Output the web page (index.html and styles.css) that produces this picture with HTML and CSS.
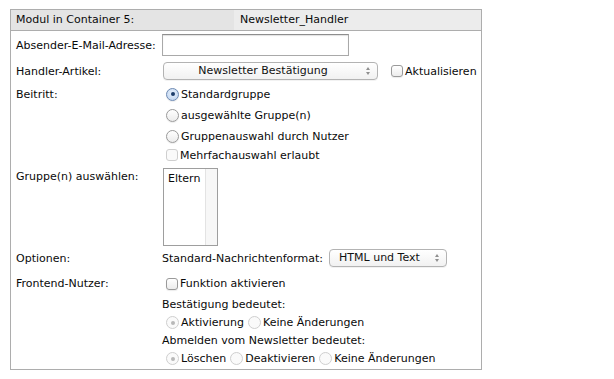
FILE: index.html
```html
<!DOCTYPE html>
<html>
<head>
    <meta charset="utf-8">
    <title>Newsletter Handler</title>
    <link rel="stylesheet" href="styles.css">
</head>
<body>
    <div class="module">
        <div class="module-head">
            <div class="head-label">Modul in Container 5:</div>
            <div class="head-value">Newsletter_Handler</div>
        </div>

        <table class="settings">
            <tr class="row-sender">
                <td class="label"><div class="line">Absender-E-Mail-Adresse:</div></td>
                <td><div class="line"><input class="text-field" type="text"></div></td>
            </tr>
            <tr class="row-handler">
                <td class="label"><div class="line">Handler-Artikel:</div></td>
                <td>
                    <div class="line">
                        <span class="select select-wide">Newsletter Bestätigung</span>
                        <label class="choice refresh"><input type="checkbox" class="check">Aktualisieren</label>
                    </div>
                </td>
            </tr>
            <tr>
                <td class="label"><div class="line l22">Beitritt:</div></td>
                <td>
                    <div class="line l22"><label class="choice"><input type="radio" name="join" class="radio" checked>Standardgruppe</label></div>
                    <div class="line l21"><label class="choice"><input type="radio" name="join" class="radio">ausgewählte Gruppe(n)</label></div>
                    <div class="line l21"><label class="choice"><input type="radio" name="join" class="radio">Gruppenauswahl durch Nutzer</label></div>
                    <div class="line l16"><label class="choice"><input type="checkbox" class="check" disabled>Mehrfachauswahl erlaubt</label></div>
                </td>
            </tr>
            <tr class="row-groups">
                <td class="label"><div class="line l18">Gruppe(n) auswählen:</div></td>
                <td>
                    <div class="listbox">
                        <div class="list-items">Eltern</div>
                        <div class="list-scroll"></div>
                    </div>
                </td>
            </tr>
            <tr>
                <td class="label"><div class="line l20">Optionen:</div></td>
                <td>
                    <div class="line l20">
                        Standard-Nachrichtenformat:
                        <span class="select select-format">HTML und Text</span>
                    </div>
                </td>
            </tr>
            <tr class="row-frontend">
                <td class="label"><div class="line l21">Frontend-Nutzer:</div></td>
                <td>
                    <div class="line l21"><label class="choice"><input type="checkbox" class="check">Funktion aktivieren</label></div>
                    <div class="line l20">Bestätigung bedeutet:</div>
                    <div class="line l17">
                        <label class="choice"><input type="radio" name="confirm" class="radio" checked disabled>Aktivierung</label>
                        <label class="choice"><input type="radio" name="confirm" class="radio" disabled>Keine Änderungen</label>
                    </div>
                    <div class="line l19">Abmelden vom Newsletter bedeutet:</div>
                    <div class="line l17">
                        <label class="choice"><input type="radio" name="leave" class="radio" checked disabled>Löschen</label>
                        <label class="choice"><input type="radio" name="leave" class="radio" disabled>Deaktivieren</label>
                        <label class="choice"><input type="radio" name="leave" class="radio" disabled>Keine Änderungen</label>
                    </div>
                </td>
            </tr>
        </table>
    </div>
</body>
</html>
```

FILE: styles.css
```css
/* Page */
body {
    margin: 0;
    padding: 9px 10px;
    background: #ffffff;
    font-family: 'DejaVu Sans', Verdana, sans-serif;
    font-size: 11px;
    color: #0a0a0a;
}

/* Module box */
.module {
    width: 470px;
    border: 1px solid #adadad;
}

.module-head {
    display: flex;
    height: 20px;
    border-bottom: 1px solid #adadad;
}

.head-label {
    width: 218px;
    padding-left: 5px;
    background: #e4e4e4;
    line-height: 20px;
}

.head-value {
    flex: 1;
    padding-left: 6px;
    background: #ececec;
    line-height: 20px;
}

/* Settings table */
.settings {
    border-collapse: collapse;
    width: 100%;
}

.settings td {
    padding: 0;
    vertical-align: top;
}

.settings td.label {
    width: 146px;
    padding-left: 5px;
}

.line {
    display: flex;
    align-items: center;
    white-space: nowrap;
}

.row-sender .line { height: 28px; }
.row-handler .line { height: 24px; }
.l16 { height: 16px; }
.l17 { height: 17px; }
.l18 { height: 18px; }
.l19 { height: 19px; }
.l20 { height: 20px; }
.l21 { height: 21px; }
.l22 { height: 22px; }

.row-groups td { padding-top: 5px; padding-bottom: 2px; }
.row-groups td.label { padding-top: 4px; }
.row-frontend td { padding-top: 5px; padding-bottom: 2px; }

/* Text input */
.text-field {
    width: 187px;
    height: 22px;
    margin: 0;
    box-sizing: border-box;
    border: 1px solid #a9a9a9;
    border-top-color: #8e8e8e;
    box-shadow: inset 0 1px 1px rgba(0,0,0,0.12);
}

/* Select boxes, Mac style */
.select {
    position: relative;
    display: inline-block;
    box-sizing: border-box;
    height: 18px;
    line-height: 16px;
    border: 1px solid #b3b3b3;
    border-radius: 4px;
    background: linear-gradient(#ffffff, #f1f1f1);
    box-shadow: 0 1px 0 rgba(0,0,0,0.05);
    color: #111;
}

.select-wide {
    width: 215px;
    margin-left: 1px;
    padding-right: 15px;
    text-align: center;
}

.select-format {
    width: 118px;
    margin-left: 6px;
    padding-left: 9px;
}

/* the small up/down arrows */
.select::before,
.select::after {
    content: "";
    position: absolute;
    right: 7px;
    width: 0;
    height: 0;
    border-left: 2.5px solid transparent;
    border-right: 2.5px solid transparent;
}

.select::before {
    top: 4px;
    border-bottom: 3px solid #8f8f8f;
}

.select::after {
    top: 9px;
    border-top: 3px solid #8f8f8f;
}

/* Checkboxes and radios */
.choice {
    display: inline-flex;
    align-items: center;
    white-space: nowrap;
}

.check,
.radio {
    -webkit-appearance: none;
    appearance: none;
    box-sizing: border-box;
    width: 13px;
    height: 13px;
    margin: 0 2px 0 4px;
    border: 1px solid #9a9a9a;
    background: linear-gradient(#ffffff, #ececec);
    box-shadow: 0 1px 1px rgba(0,0,0,0.08);
    position: relative;
}

.check {
    width: 12px;
    height: 12px;
    border-radius: 3px;
}

.radio {
    border-radius: 50%;
}

.radio:checked::after {
    content: "";
    position: absolute;
    left: 3.5px;
    top: 3.5px;
    width: 4px;
    height: 4px;
    border-radius: 50%;
    background: #1c3d6b;
}

.radio:checked:not(:disabled) {
    border-color: #6f8bb3;
    background: radial-gradient(circle at 50% 40%, #eaf2fc, #b9d0ee);
}

.check:disabled,
.radio:disabled {
    border-color: #cfcfcf;
    background: #fafafa;
    box-shadow: none;
}

.radio:checked:disabled::after {
    background: #b8b8b8;
}

.refresh {
    margin-left: 9px;
}

/* Group list box */
.listbox {
    display: flex;
    width: 55px;
    height: 78px;
    margin-left: 1px;
    box-sizing: border-box;
    border: 1px solid #9e9e9e;
}

.list-items {
    flex: 1;
    padding: 3px 4px;
}

.list-scroll {
    width: 11px;
    border-left: 1px solid #e3e3e3;
    background: #f7f7f7;
}
```
